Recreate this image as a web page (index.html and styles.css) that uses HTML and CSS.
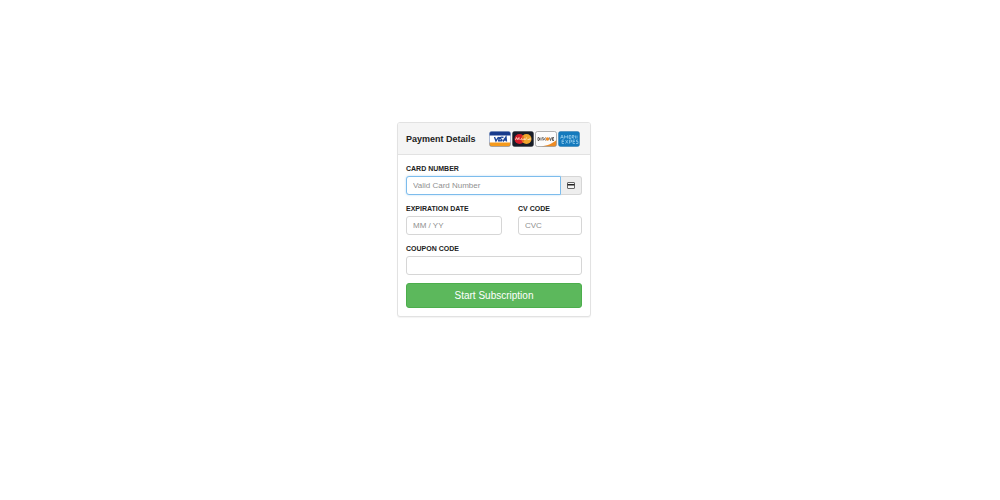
FILE: index.html
```html
<!DOCTYPE html>
<html lang="en">
<head>
<meta charset="utf-8">
<title>Payment Details</title>
<link rel="stylesheet" href="styles.css">
</head>
<body>
<main class="page">
  <form class="panel">
    <header class="panel-header">
      <h1 class="title">Payment Details</h1>
      <div class="cards">
        <svg class="card" viewBox="0 0 44 32" role="img" aria-label="Visa">
          <rect x="1" y="1" width="42" height="30" rx="4" fill="#fff"/>
          <path d="M1 9V5a4 4 0 0 1 4-4h34a4 4 0 0 1 4 4v4z" fill="#173b8c"/>
          <path d="M1 23h42v4a4 4 0 0 1-4 4H5a4 4 0 0 1-4-4z" fill="#f59a1c"/>
          <g fill="none" stroke="#1c4598" stroke-width="2.8">
            <path d="M11 12l3 8 5-8M21 12l-2 9M29 13c-6-2-8 1-5 3s2 5-3 3M28 21l6-9 1 9M30 18h5"/>
          </g>
          <rect x="1" y="1" width="42" height="30" rx="4" fill="none" stroke="#5c78ac"/>
        </svg>
        <svg class="card" viewBox="0 0 44 32" role="img" aria-label="MasterCard">
          <rect x="1" y="1" width="42" height="30" rx="4" fill="#171d28" stroke="#343840"/>
          <circle cx="15" cy="16" r="10" fill="#d51d2b"/>
          <circle cx="29" cy="16" r="10" fill="#f0a62c"/>
          <path d="M22 9a10 10 0 0 1 0 14a10 10 0 0 1 0-14" fill="#e96b22"/>
          <path d="M7 18l2-5 2 4 3-4v5M17 18l2-3 2 3M25 14l-2 3h3M29 13l-2 5M31 17h4M36 14v4" fill="none" stroke="#ffe6cb" stroke-width="1.6"/>
        </svg>
        <svg class="card" viewBox="0 0 44 32" role="img" aria-label="Discover">
          <rect x="1" y="1" width="42" height="30" rx="4" fill="#fcfcfc"/>
          <path d="M43 18v9a4 4 0 0 1-4 4H12c14-2 23-6 31-13z" fill="#ed8b24"/>
          <path d="M6 13v6h2q3-3 0-6zM12 13v6M17 13h-2l2 5h-2M21 13q-4 3 0 6M29 13l2 6 2-6M38 13h-3v6h3M35 16h3" fill="none" stroke="#55504e" stroke-width="1.8"/>
          <circle cx="25" cy="16" r="3.5" fill="#ed8b24"/>
          <rect x="1" y="1" width="42" height="30" rx="4" fill="none" stroke="#909090" stroke-width="1.4"/>
        </svg>
        <svg class="card" viewBox="0 0 44 32" role="img" aria-label="American Express">
          <rect x="1" y="1" width="42" height="30" rx="4" fill="#147abd" stroke="#2e77a8"/>
          <path d="M5 15l3-7 3 7M6 13h4M13 15V9l3 4 3-4v6M26 9h-4v6h4M22 12h4M28 15V9h4v3h-4l4 3M35 9v6M38 15V9M12 18h-4v7h4M8 21h4M15 18l5 7M20 18l-5 7M23 25v-7h4v4h-4M34 18h-4v7h4M30 21h4M40 18h-3v3h3v4h-4" fill="none" stroke="#9bd0ee" stroke-width="1.4"/>
        </svg>
      </div>
    </header>
    <div class="panel-body">
      <div class="field">
        <label class="label" for="number">CARD NUMBER</label>
        <div class="group">
          <input class="input input-active" id="number" type="text" placeholder="Valid Card Number">
          <span class="addon">
            <svg class="addon-icon" viewBox="0 0 16 14" aria-hidden="true">
              <rect x="1" y="1" width="14" height="12" rx="1" fill="#f5f5f5" stroke="#444" stroke-width="1.6"/>
              <path d="M1 4h14v3H1z" fill="#222"/>
            </svg>
          </span>
        </div>
      </div>
      <div class="row">
        <div class="field">
          <label class="label" for="expiry">EXPIRATION DATE</label>
          <input class="input" id="expiry" type="text" placeholder="MM / YY">
        </div>
        <div class="field">
          <label class="label" for="cvc">CV CODE</label>
          <input class="input" id="cvc" type="text" placeholder="CVC">
        </div>
      </div>
      <div class="field">
        <label class="label" for="coupon">COUPON CODE</label>
        <input class="input" id="coupon" type="text">
      </div>
      <button class="submit" type="button">Start Subscription</button>
    </div>
  </form>
</main>
</body>
</html>
```
FILE: styles.css
```css
* {
  box-sizing: border-box;
}

body {
  margin: 0;
  background: #fff;
  color: #222;
  font-family: "Liberation Sans", Arial, sans-serif;
}

.page {
  display: flex;
  justify-content: center;
  padding: 122px 12px 24px 0;
}

.panel {
  width: 100%;
  max-width: 194px;
  border: 1px solid #e2e2e2;
  border-radius: 3px;
  background: #fff;
  box-shadow: 0 1px 1px rgba(0, 0, 0, 0.05);
}

.panel-header {
  display: flex;
  align-items: center;
  justify-content: space-between;
  padding: 8px 10px 7px 8px;
  border-bottom: 1px solid #e2e2e2;
  border-radius: 2px 2px 0 0;
  background: #f5f5f5;
}

.title {
  margin: 0;
  font-size: 9px;
  line-height: 12px;
  white-space: nowrap;
}

.cards {
  display: flex;
  gap: 1px;
}

.card {
  display: block;
  width: 22px;
  height: 16px;
}

.panel-body {
  display: flex;
  flex-direction: column;
  gap: 8px;
  padding: 8px;
}

.field {
  display: flex;
  flex-direction: column;
  gap: 2px;
  min-width: 0;
}

.label {
  font-size: 7px;
  font-weight: bold;
  line-height: 11px;
}

.row {
  display: grid;
  grid-template-columns: 3fr 2fr;
  gap: 16px;
}

.group {
  display: flex;
}

.input {
  width: 100%;
  min-width: 0;
  height: 19px;
  padding: 0 6px;
  border: 1px solid #d6d6d6;
  border-radius: 3px;
  background: #fff;
  color: #555;
  font-family: inherit;
  font-size: 8px;
}

.input::placeholder {
  color: #909090;
  opacity: 1;
}

.input-active {
  flex: 1;
  border-color: #7dbcec;
  border-radius: 3px 0 0 3px;
  box-shadow: 0 0 2px rgba(102, 175, 233, 0.5);
}

.addon {
  display: flex;
  align-items: center;
  justify-content: center;
  width: 21px;
  border: 1px solid #d6d6d6;
  border-left: 0;
  border-radius: 0 3px 3px 0;
  background: #eee;
}

.addon-icon {
  width: 8px;
  height: 7px;
}

.submit {
  height: 25px;
  padding: 0;
  border: 1px solid #4cae4c;
  border-radius: 3px;
  background: #5cb85c;
  color: #fff;
  font-family: inherit;
  font-size: 10px;
}
```
